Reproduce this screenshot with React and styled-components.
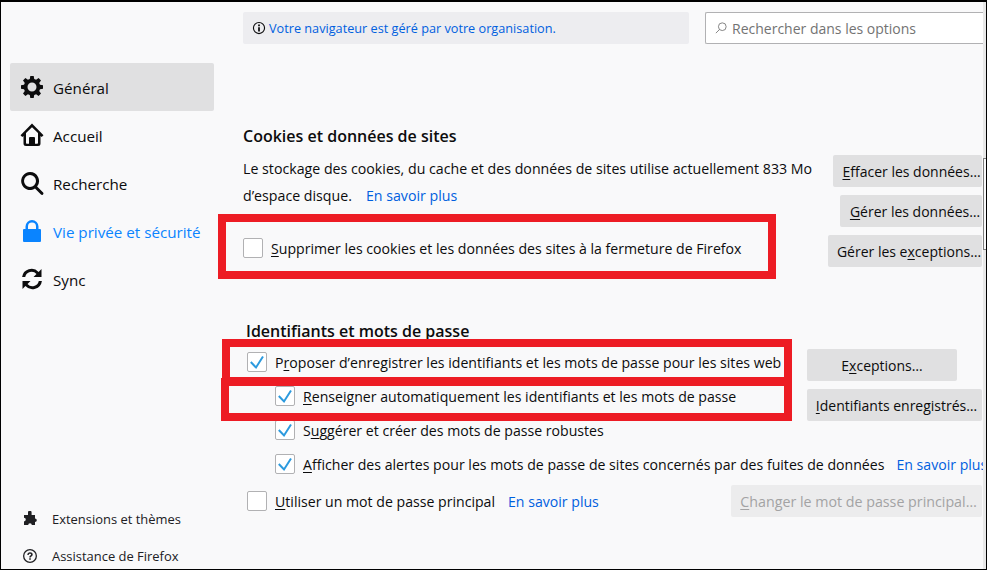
import React from "react";
import styled, { createGlobalStyle } from "styled-components";

const Global = createGlobalStyle`
  html, body { margin: 0; padding: 0; background: #f9f9fa; }
  body { font-family: "Open Sans", "Noto Sans", sans-serif; font-size: 14px; color: #0c0c0d; }
  * { box-sizing: border-box; }
`;

const Frame = styled.div`
  position: relative; width: 987px; height: 570px; overflow: hidden;
  background: #f9f9fa; border: 1px solid #000; border-top-width: 2px;
  display: grid; grid-template-columns: 242px 740px 3px;
`;

const Sidebar = styled.aside`
  display: flex; flex-direction: column; padding: 61px 0 0 9px; height: 100%; min-height: 0;
`;
const NavItem = styled.div`
  width: 204px; height: 48px; display: flex; align-items: center; padding-left: 10px; gap: 9px;
  border-radius: 2px; font-size: 15.2px;
  background: ${p => (p.$active ? "#e0e0e1" : "transparent")};
  color: ${p => (p.$blue ? "#0a84ff" : "#0c0c0d")};
`;
const NavLabel = styled.span`padding-top: 2px;`;
const NavIcon = styled.svg`width: 24px; height: 24px; flex: none; fill: currentColor;`;
const SideFoot = styled.div`
  margin-top: auto; display: flex; flex-direction: column; gap: 11px;
`;
const FootItem = styled.div`
  display: flex; align-items: center; height: 26px; padding-left: 12px; gap: 14px; font-size: 12.95px; color: #202023;
`;
const FootIcon = styled.svg`width: 16px; height: 16px; flex: none; fill: currentColor;`;

const Main = styled.main`display: flex; flex-direction: column; min-width: 0; padding-top: 10px; overflow: hidden;`;
const TopBar = styled.div`display: flex; gap: 16px; height: 32px; flex: none;`;
const Notice = styled.div`
  width: 446px; background: #ededf0; border-radius: 2px; display: flex; align-items: center;
  padding-left: 9px; gap: 3px; color: #0060df; font-size: 12.7px;
`;
const NoticeIcon = styled.svg`width: 14px; height: 14px; flex: none; fill: #0c0c0d;`;
const Search = styled.div`
  flex: 1; background: #fff; border: 1px solid #b1b1b3; border-right-width: 0; border-radius: 2px 0 0 2px;
  display: flex; align-items: center; padding-left: 9px; gap: 5px; color: #737373; font-size: 14px;
`;

const Heading = styled.h2`
  margin: ${p => p.$mt}px 0 0 ${p => p.$ml || 0}px; font-size: 16px; line-height: 22px; font-weight: 600; color: #0c0c0d;
`;
const Rows = styled.div`display: grid; grid-template-columns: minmax(0, 1fr) auto; margin-top: ${p => p.$mt || 0}px;`;
const TextCol = styled.div`display: flex; flex-direction: column; min-width: 0;`;
const ButtonCol = styled.div`
  display: flex; flex-direction: column; align-items: flex-end; gap: 8px; padding-right: 1px;
  padding-top: ${p => p.$pt || 0}px;
`;
const Para = styled.p`margin: 0; font-size: 14.2px; line-height: 27px; width: 590px;`;
const Link = styled.span`color: #0060df;`;
const Btn = styled.div`
  height: 32px; background: ${p => (p.$off ? "#ececed" : "#e0e0e1")}; border-radius: 2px; display: flex; align-items: center; justify-content: center;
  font-size: ${p => (p.$off ? 14.25 : 14)}px; color: ${p => (p.$off ? "#a3a3a4" : "#0c0c0d")}; white-space: nowrap;
  width: ${p => p.$w}px; padding-left: ${p => p.$pl || 0}px; margin-top: ${p => p.$mt || 0}px; margin-right: ${p => p.$mr || 0}px;
`;
const Row = styled.label`
  display: flex; align-items: center; white-space: nowrap; font-size: 14.12px;
  height: ${p => p.$h}px; margin-left: ${p => p.$ind || 0}px; margin-top: ${p => p.$mt || 0}px; gap: 8px;
`;
const Box = styled.span`
  width: 20px; height: 20px; flex: none; background: #fff; border: 1px solid #b1b1b3; border-radius: 2px;
  display: flex; align-items: center; justify-content: center;
`;
const CheckMark = styled.svg`width: 18px; height: 18px; fill: none; stroke: #2c9ade; stroke-width: 2;`;
const Check = () => (
  <CheckMark viewBox="0 0 18 18"><path d="M2.800 9 8 14.500 15 3.500" /></CheckMark>
);
const Spacer = styled.span`display: inline-block; width: ${p => p.$w}px;`;
const U = styled.u`text-underline-offset: 2px;`;
const Mark = styled.div`
  position: absolute; border: 8px solid #ed1c24; pointer-events: none;
  left: ${p => p.$x}px; top: ${p => p.$y}px; width: ${p => p.$w}px; height: ${p => p.$h}px;
`;
const Scrollbar = styled.div`background: #e8e8e8; padding-top: 156px;`;
const ScrollThumb = styled.div`height: 92px; border: 1px solid #808080; border-right: 0; background: #f9f9fa;`;

const gear = "M10.3 1h3.4l.5 3 1.9.8 2.5-1.8 2.4 2.4-1.8 2.5.8 1.9 3 .5v3.4l-3 .5-.8 1.9 1.8 2.5-2.4 2.4-2.5-1.8-1.9.8-.5 3h-3.4l-.5-3-1.9-.8-2.5 1.8-2.4-2.4 1.8-2.5-.8-1.9-3-.5v-3.4l3-.5.8-1.9L3 5.4 5.4 3l2.5 1.8 1.9-.8zM12 7.500a4.500 4.500 0 1 0 0 9 4.500 4.500 0 0 0 0-9z";

export default function App() {
  return (
    <Frame>
      <Global />
      <Sidebar>
        <NavItem $active>
          <NavIcon viewBox="0 0 24 24"><path fillRule="evenodd" d={gear} /></NavIcon><NavLabel>Général</NavLabel>
        </NavItem>
        <NavItem>
          <NavIcon viewBox="0 0 24 24"><path fillRule="evenodd" d="M12 .5.500 12.200l1.800 1.800L3.500 13v7.500A2.500 2.500 0 0 0 6 23h12a2.500 2.500 0 0 0 2.500-2.500V13l1.200 1 1.800-1.800zM12 4.300l6 5.800V20a.8.8 0 0 1-.8.8H15V15a1 1 0 0 0-1-1h-4a1 1 0 0 0-1 1v5.800H6.800a.8.8 0 0 1-.8-.8v-9.900z" /></NavIcon><NavLabel>Accueil</NavLabel>
        </NavItem>
        <NavItem>
          <NavIcon viewBox="0 0 24 24"><path fillRule="evenodd" d="M10 1a9 9 0 0 1 7.100 14.500l6 6a1.500 1.500 0 0 1-2.100 2.100l-6-6A9 9 0 1 1 10 1zm0 3a6 6 0 1 0 0 12 6 6 0 0 0 0-12z" /></NavIcon><NavLabel>Recherche</NavLabel>
        </NavItem>
        <NavItem $blue>
          <NavIcon viewBox="0 0 24 24"><path fillRule="evenodd" d="M12 1a6.500 6.500 0 0 1 6.500 6.500V10H20a1 1 0 0 1 1 1v11a1 1 0 0 1-1 1H4a1 1 0 0 1-1-1V11a1 1 0 0 1 1-1h1.500V7.500A6.500 6.500 0 0 1 12 1zm0 2.500a4 4 0 0 0-4 4V10h8V7.500a4 4 0 0 0-4-4z" /></NavIcon><NavLabel>Vie privée et sécurité</NavLabel>
        </NavItem>
        <NavItem>
          <NavIcon viewBox="0 0 24 24"><path d="M21.500 2v8h-8l3-3A6.500 6.500 0 0 0 5.200 10H2.100a9.500 9.500 0 0 1 16.500-5.100zM2.500 22v-8h8l-3 3a6.500 6.500 0 0 0 11.300-3h3.100a9.500 9.500 0 0 1-16.500 5.100z" /></NavIcon><NavLabel>Sync</NavLabel>
        </NavItem>
        <SideFoot>
          <FootItem>
            <FootIcon viewBox="0 0 16 16"><path d="M6 1.500a1.800 1.800 0 0 1 3.600 0V4h3.400v3.400a1.800 1.800 0 0 1 0 3.600V14H9.800a1.800 1.800 0 0 0-3.600 0H2v-3.600a1.800 1.800 0 0 0 0-3.600V4h4z" /></FootIcon>Extensions et thèmes
          </FootItem>
          <FootItem>
            <FootIcon viewBox="0 0 16 16"><path fillRule="evenodd" d="M8 1a7 7 0 1 1 0 14A7 7 0 0 1 8 1zm0 1.300a5.700 5.700 0 1 0 0 11.400A5.700 5.700 0 0 0 8 2.300zM7.200 10.200h1.600v1.500H7.200zM8 4.300c1.600 0 2.700.9 2.700 2.200 0 1-.6 1.500-1.200 1.900-.5.300-.7.500-.7 1H7.300c0-1 .5-1.500 1.100-1.900.5-.3.700-.5.700-.9s-.4-.8-1.100-.8c-.8 0-1.200.4-1.300 1.100H5.300C5.400 5.300 6.400 4.300 8 4.300z" /></FootIcon>Assistance de Firefox
          </FootItem>
        </SideFoot>
      </Sidebar>
      <Main>
        <TopBar>
          <Notice>
            <NoticeIcon viewBox="0 0 16 16"><path fillRule="evenodd" d="M8 1a7 7 0 1 1 0 14A7 7 0 0 1 8 1zm0 1.300a5.700 5.700 0 1 0 0 11.400A5.700 5.700 0 0 0 8 2.300zM7 7h2v5H7zM7 4h2v2H7z" /></NoticeIcon>
            Votre navigateur est géré par votre organisation.
          </Notice>
          <Search>
            <svg width="12" height="12" viewBox="0 0 14 14" fill="none" stroke="#737373"><circle cx="8.500" cy="5.500" r="4.500" /><path d="M5.300 8.700 1 13" /></svg>
            Rechercher dans les options
          </Search>
        </TopBar>
        <Heading $mt={81}>Cookies et données de sites</Heading>
        <Rows $mt={8}>
          <TextCol>
            <Para>Le stockage des cookies, du cache et des données de sites utilise actuellement 833 Mo d’espace disque.<Spacer $w={14} /><Link>En savoir plus</Link></Para>
            <Row $h={56} $mt={11}><Box /><span><U>S</U>upprimer les cookies et les données des sites à la fermeture de Firefox</span></Row>
          </TextCol>
          <ButtonCol>
            <Btn $w={149} $pl={8}><span><U>E</U>ffacer les données…</span></Btn>
            <Btn $w={142} $pl={8}><span><U>G</U>érer les données…</span></Btn>
            <Btn $w={154} $pl={8}><span>Gérer les e<U>x</U>ceptions…</span></Btn>
          </ButtonCol>
        </Rows>
        <Heading $mt={44} $ml={3}>Identifiants et mots de passe</Heading>
        <Rows $mt={3}>
          <TextCol>
            <Row $h={34} $ind={4}><Box><Check /></Box><span>P<U>r</U>oposer d’enregistrer les identifiants et les mots de passe pour les sites web</span></Row>
            <Row $h={34} $ind={32}><Box><Check /></Box><span><U>R</U>enseigner automatiquement les identifiants et les mots de passe</span></Row>
            <Row $h={34} $ind={32}><Box><Check /></Box><span>S<U>u</U>ggérer et créer des mots de passe robustes</span></Row>
            <Row $h={34} $ind={32}><Box><Check /></Box><span><U>A</U>fficher des alertes pour les mots de passe de sites concernés par des fuites de données<Spacer $w={12} /><Link>En savoir plus</Link></span></Row>
            <Row $h={40} $ind={4}><Box /><span><U>U</U>tiliser un mot de passe principal<Spacer $w={13} /><Link>En savoir plus</Link></span></Row>
          </TextCol>
          <ButtonCol $pt={4}>
            <Btn $w={150} $mr={25}><span>E<U>x</U>ceptions…</span></Btn>
            <Btn $w={175} $pl={4}><span><U>I</U>dentifiants enregistrés…</span></Btn>
            <Btn $w={251} $pl={4} $off $mt={56}><span><U>C</U>hanger le mot de passe principal…</span></Btn>
          </ButtonCol>
        </Rows>
      </Main>
      <Scrollbar><ScrollThumb /></Scrollbar>
      <Mark $x={217} $y={212} $w={558} $h={65} />
      <Mark $x={221} $y={337} $w={570} $h={46} />
      <Mark $x={220} $y={376} $w={571} $h={43} />
    </Frame>
  );
}
